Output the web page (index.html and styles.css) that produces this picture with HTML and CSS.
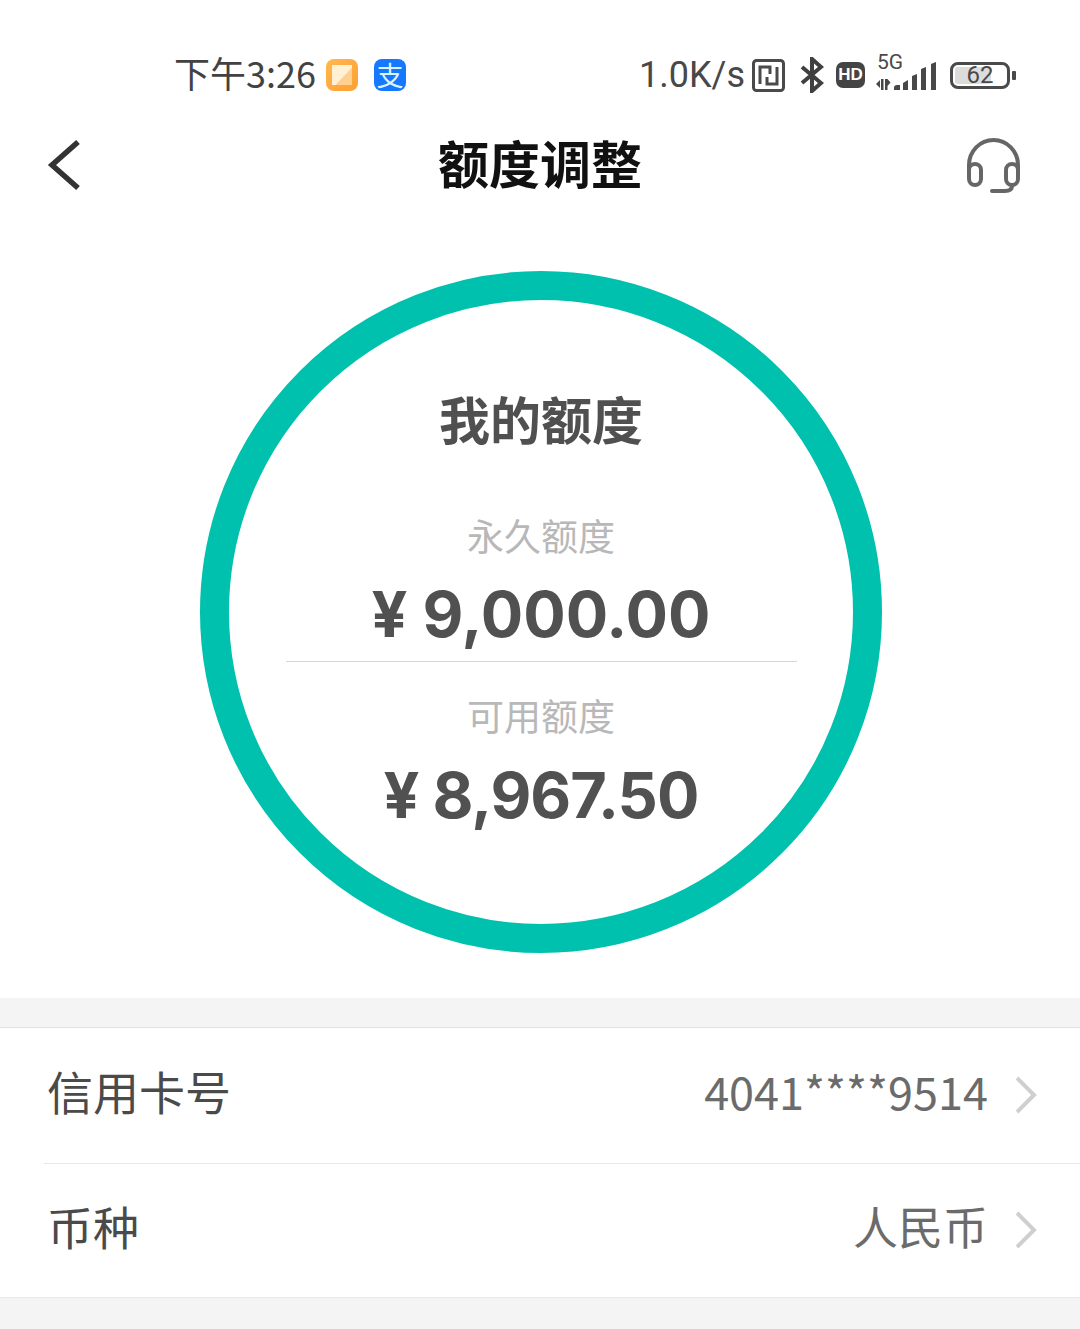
FILE: index.html
```html
<!DOCTYPE html>
<html lang="en">
<head>
    <meta charset="UTF-8">
    <meta name="viewport" content="width=device-width, initial-scale=1.0">
    <title>额度调整</title>
    <link rel="stylesheet" href="styles.css">
</head>
<body>
    <div class="status-bar">
        <span class="time">下午3:26</span>
        <span class="app-icon app-orange">
            <svg width="22" height="22" viewBox="0 0 22 22"><path d="M1 1h20v3L5 21H1z" fill="#fff0d6"/><path d="M21 4v17H5z" fill="#ffd08f"/></svg>
        </span>
        <span class="app-icon app-blue">支</span>

        <div class="status-right">
            <span class="speed">1.0K/s</span>
            <svg class="nfc" width="33" height="33" viewBox="0 0 33 33" fill="none" stroke="#4a4a4a" stroke-width="3"><rect x="1.500" y="1.500" width="30" height="30" rx="3"/><path d="M8 25V8h10v7"/><path d="M25 8v17H15v-7"/></svg>
            <svg class="bluetooth" width="24" height="36" viewBox="0 0 24 36" fill="none" stroke="#404040" stroke-width="4"><path d="M2 10l19 16-9 8V2l9 8L2 26"/></svg>
            <span class="hd">HD</span>
            <div class="signal">
                <span class="five-g">5G</span>
                <svg width="62" height="29" viewBox="0 0 62 29" fill="#484848"><path d="M0 22l4-4v8zM5 17h2.500v11H5zM9 17h2.500v11H9zM11.500 17l3 3.500-3 3.500z"/><path d="M18 25a3 3 0 0 1 3-2h3v5h-6zM27 21l5-3v10h-5zM36 14l5-2v16h-5zM45 7l5-2v23h-5zM55 2l5-2v28h-5z"/></svg>
            </div>
            <div class="battery">
                <div class="battery-body">
                    <span class="battery-fill"></span>
                    <span class="battery-num">62</span>
                </div>
                <span class="battery-tip"></span>
            </div>
        </div>
    </div>

    <div class="nav">
        <svg class="nav-back" width="36" height="52" viewBox="0 0 36 52" fill="none" stroke="#333" stroke-width="5.500"><path d="M32 3L6 26l26 23"/></svg>
        <h1>额度调整</h1>
        <svg class="nav-help" width="58" height="58" viewBox="0 0 58 58" fill="none" stroke="#666" stroke-width="4" stroke-linecap="round"><path d="M5 36v-7a24.500 25 0 0 1 49 0v7"/><rect x="5" y="28" width="12" height="21" rx="6"/><rect x="42" y="28" width="12" height="21" rx="6"/><path d="M48 50q0 5-7 5H28"/></svg>
    </div>

    <div class="circle-wrap">
        <div class="circle">
            <div class="circle-title">我的额度</div>
            <div class="label label-first">永久额度</div>
            <div class="amount amount-first">¥ 9,000.00</div>
            <div class="divider"></div>
            <div class="label label-second">可用额度</div>
            <div class="amount amount-second">¥ 8,967.50</div>
        </div>
    </div>

    <div class="list">
        <div class="row row-first">
            <span class="row-name">信用卡号</span>
            <span class="row-value">4041****9514</span>
            <svg width="22" height="38" viewBox="0 0 22 38" fill="none" stroke="#cfcfcf" stroke-width="4"><path d="M2 2l17 17L2 36"/></svg>
        </div>
        <div class="row">
            <span class="row-name">币种</span>
            <span class="row-value">人民币</span>
            <svg width="22" height="38" viewBox="0 0 22 38" fill="none" stroke="#cfcfcf" stroke-width="4"><path d="M2 2l17 17L2 36"/></svg>
        </div>
    </div>
</body>
</html>
```

FILE: styles.css
```css
body {
    margin: 0;
    background-color: #f4f4f4;
    font-family: "Noto Sans CJK SC", "Noto Sans", sans-serif;
    height: 1329px;
    overflow: hidden;
}

.status-bar {
    background-color: white;
    height: 110px;
    padding: 40px 64px 0 174px;
    box-sizing: border-box;
    display: flex;
    align-items: center;
}

.time {
    font-family: "Noto Sans CJK SC", Roboto, sans-serif;
    font-size: 36px;
    color: #424242;
    width: 142px;
    white-space: nowrap;
    margin-right: 10px;
    margin-bottom: 6px;
}

.app-icon {
    width: 32px;
    height: 32px;
    border-radius: 8px;
    display: flex;
    align-items: center;
    justify-content: center;
}

.app-orange {
    background: linear-gradient(135deg, #ffb84e, #fd9f33);
    margin-right: 16px;
}

.app-blue {
    background-color: #1677ff;
    color: #d8f4ff;
    font-size: 27px;
    line-height: 32px;
}

.status-right {
    margin-left: auto;
    display: flex;
    align-items: center;
}

.speed {
    font-family: Roboto, sans-serif;
    font-size: 36px;
    color: #484848;
    margin-right: 7px;
}

.bluetooth {
    margin-left: 15px;
}

.hd {
    font-family: "Liberation Sans", sans-serif;
    font-weight: bold;
    font-size: 17px;
    line-height: 26px;
    width: 29px;
    text-align: center;
    background-color: #444;
    color: white;
    border-radius: 7px;
    margin-left: 12px;
}

.signal {
    margin-left: 11px;
    position: relative;
    width: 62px;
    height: 32px;
    display: flex;
    align-items: flex-end;
}

.five-g {
    position: absolute;
    left: 1px;
    top: -7px;
    font-family: Roboto, sans-serif;
    font-size: 21px;
    line-height: 20px;
    color: #4a4a4a;
}

.battery {
    margin-left: 12px;
    display: flex;
    align-items: center;
}

.battery-body {
    width: 60px;
    height: 27px;
    border: 3px solid #4a4a4a;
    border-radius: 8px;
    position: relative;
    box-sizing: border-box;
    padding: 2px;
}

.battery-fill {
    display: block;
    width: 36px;
    height: 100%;
    background-color: #dcdcdc;
    border-radius: 3px;
}

.battery-num {
    position: absolute;
    left: 0;
    right: 0;
    top: 0;
    text-align: center;
    font-family: Roboto, sans-serif;
    font-size: 24px;
    line-height: 21px;
    color: #484848;
}

.battery-tip {
    width: 4px;
    height: 9px;
    margin-left: 2px;
    background-color: #4a4a4a;
    border-radius: 1px;
}

.nav {
    background-color: white;
    height: 110px;
    padding: 0 58px;
    display: grid;
    grid-template-columns: 1fr auto 1fr;
    align-items: center;
}

.nav-back {
    margin-left: -12px;
}

.nav-help {
    justify-self: end;
}

h1 {
    margin: 0 0 6px;
    font-size: 51px;
    font-weight: bold;
    line-height: 60px;
    color: #111;
}

.circle-wrap {
    background-color: white;
    height: 778px;
    padding-top: 51px;
    box-sizing: border-box;
    display: flex;
    justify-content: center;
}

.circle {
    width: 682px;
    height: 682px;
    border: 29px solid #00c1ad;
    border-radius: 50%;
    box-sizing: border-box;
    margin-left: 2px;
    display: flex;
    flex-direction: column;
    align-items: center;
    padding-top: 88px;
}

.circle-title {
    font-size: 51px;
    font-weight: bold;
    line-height: 60px;
    color: #505050;
}

.label {
    font-size: 37px;
    line-height: 50px;
    color: #b8b8b8;
}

.label-first {
    margin-top: 62px;
}

.label-second {
    margin-top: 28px;
}

.amount {
    font-family: Inter, sans-serif;
    font-size: 63px;
    font-weight: 700;
    line-height: 80px;
    color: #515151;
}

.amount-first {
    margin-top: 14px;
    margin-bottom: -1px;
}

.amount-second {
    margin-top: 15px;
    letter-spacing: -1px;
}

.divider {
    width: 511px;
    height: 1px;
    margin-top: 8px;
    background-color: #d8d8d8;
}

.list {
    background-color: white;
    margin-top: 29px;
    border-top: 1px solid #e2e2e2;
    border-bottom: 1px solid #e8e8e8;
}

.row {
    height: 133px;
    margin-left: 44px;
    padding-right: 43px;
    display: flex;
    align-items: center;
}

.row svg {
    margin-bottom: 2px;
}

.row-first {
    height: 135px;
    border-bottom: 1px solid #e8e8e8;
}

.row-name {
    font-size: 46px;
    color: #4a4a4a;
    margin-left: 3px;
    margin-bottom: 12px;
}

.row-value {
    margin-left: auto;
    margin-right: 27px;
    margin-bottom: 10px;
    font-family: "Noto Sans CJK SC", Roboto, sans-serif;
    font-size: 45px;
    color: #6b6b6b;
}
```
